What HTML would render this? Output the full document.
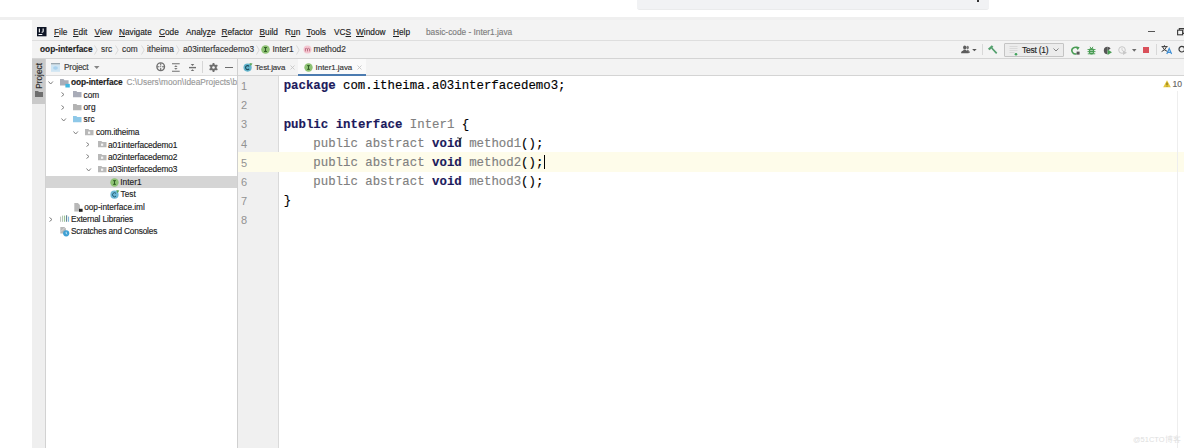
<!DOCTYPE html>
<html><head><meta charset="utf-8">
<style>
*{margin:0;padding:0;box-sizing:border-box}
html,body{width:1184px;height:448px;overflow:hidden;background:#fff;position:relative;font-family:"Liberation Sans",sans-serif;font-size:8px;color:#222}
.a{position:absolute}
.t{position:absolute;white-space:pre;-webkit-text-stroke:0.15px currentColor;line-height:13.8px;height:13.8px;font-size:8.3px}
.u{text-decoration:underline;text-decoration-thickness:0.8px;text-underline-offset:0.6px}
.code{position:absolute;-webkit-text-stroke:0.15px currentColor;font-family:"Liberation Mono",monospace;font-size:12.37px;line-height:19.2px;white-space:pre;color:#000}
.kw{color:#1c1a5c;font-weight:bold}
.gr{color:#808080}
.ln{position:absolute;white-space:pre;left:238px;width:40px;font-family:"Liberation Sans",sans-serif;font-size:11px;color:#929292;line-height:19.2px;padding-left:3px}
svg{position:absolute;overflow:visible}
</style></head><body>

<!-- top browser bits -->
<div class="a" style="left:637px;top:-10px;width:352px;height:20px;border-radius:3px;background:#f1f2f4;border-bottom:1px solid #eaebec"></div>
<div class="a" style="left:0;top:17px;width:1184px;height:3px;background:#efefef"></div>

<!-- IDE frame -->
<div class="a" style="left:32px;top:20px;width:1152px;height:428px;background:#f3f3f3"></div>

<!-- menu row -->
<div class="a" style="left:32px;top:40px;width:1152px;height:1px;background:#dedede"></div>
<svg style="left:37px;top:27px" width="9.5" height="9.3"><rect width="9.5" height="9.3" fill="#0e1525"/><rect x="1.8" y="1.6" width="1.1" height="3.8" fill="#fff"/><path d="M5.6 1.6h1.1v2.7q0 1.4-1.5 1.4h-0.6v-1h0.4q0.6 0 0.6-0.5z" fill="#fff"/><rect x="1.5" y="7" width="3.8" height="1" fill="#fff"/></svg>

<div class="t" style="left:54px;top:26px"><span class="u">F</span>ile</div>
<div class="t" style="left:73px;top:26px"><span class="u">E</span>dit</div>
<div class="t" style="left:94.5px;top:26px"><span class="u">V</span>iew</div>
<div class="t" style="left:119px;top:26px"><span class="u">N</span>avigate</div>
<div class="t" style="left:159px;top:26px"><span class="u">C</span>ode</div>
<div class="t" style="left:186px;top:26px">Analy<span class="u">z</span>e</div>
<div class="t" style="left:221.5px;top:26px"><span class="u">R</span>efactor</div>
<div class="t" style="left:259.5px;top:26px"><span class="u">B</span>uild</div>
<div class="t" style="left:285px;top:26px">R<span class="u">u</span>n</div>
<div class="t" style="left:306.5px;top:26px"><span class="u">T</span>ools</div>
<div class="t" style="left:334px;top:26px">VC<span class="u">S</span></div>
<div class="t" style="left:356px;top:26px"><span class="u">W</span>indow</div>
<div class="t" style="left:393px;top:26px"><span class="u">H</span>elp</div>
<div class="t" style="left:426px;top:26px;color:#7e7e7e">basic-code - Inter1.java</div>
<div class="a" style="left:1148px;top:31.3px;width:7px;height:1.1px;background:#555"></div>
<svg style="left:1176.5px;top:28.3px" width="9" height="7.5"><path d="M2.3 2V0.6h5v4.8H6" fill="none" stroke="#3a3a3a" stroke-width="1.1"/><rect x="0.6" y="2.2" width="5" height="4.6" fill="none" stroke="#3a3a3a" stroke-width="1.1"/></svg>

<!-- breadcrumb row -->
<div class="a" style="left:32px;top:58px;width:1152px;height:1px;background:#d4d4d4"></div>
<div class="t" style="left:40px;top:43px;font-weight:bold;color:#222">oop-interface</div>
<div class="t" style="left:101px;top:43px;color:#333">src</div>
<div class="t" style="left:122px;top:43px;color:#333">com</div>
<div class="t" style="left:147px;top:43px;color:#333">itheima</div>
<div class="t" style="left:183px;top:43px;color:#333">a03interfacedemo3</div>
<div class="t" style="left:272.5px;top:43px;color:#333">Inter1</div>
<div class="t" style="left:313.5px;top:43px;color:#333">method2</div>

<!-- main area -->
<!-- left stripe -->
<div class="a" style="left:32px;top:59px;width:13px;height:389px;background:#efefef"></div>
<div class="a" style="left:45px;top:59px;width:1px;height:389px;background:#d2d2d2"></div>
<div class="a" style="left:32px;top:59px;width:13px;height:45px;background:#cacaca"></div>
<div class="t" style="left:21.2px;top:69px;transform:rotate(-90deg);transform-origin:center;width:38px;text-align:center;color:#2a2a2a">Project</div>

<!-- project panel -->
<div class="a" style="left:46px;top:59px;width:191px;height:16px;background:#f5f5f5"></div>
<div class="a" style="left:46px;top:75px;width:191px;height:1px;background:#dcdcdc"></div>
<div class="a" style="left:46px;top:76px;width:191px;height:372px;background:#fff"></div>
<div class="t" style="left:64px;top:61px;color:#3a3a3a;letter-spacing:-0.2px">Project</div>

<!-- selected row -->
<div class="a" style="left:46px;top:176px;width:191px;height:12px;background:#d5d5d5"></div>

<div class="t" style="left:71px;top:76px;font-weight:bold;letter-spacing:-0.08px">oop-interface</div>
<div class="t" style="left:126.5px;top:76px;color:#999">C:\Users\moon\IdeaProjects\b</div>
<div class="t" style="left:83.5px;top:88.5px">com</div>
<div class="t" style="left:83.5px;top:101px">org</div>
<div class="t" style="left:83.5px;top:113px">src</div>
<div class="t" style="left:96px;top:125.5px;letter-spacing:-0.13px">com.itheima</div>
<div class="t" style="left:108px;top:138.5px;letter-spacing:-0.1px">a01interfacedemo1</div>
<div class="t" style="left:108px;top:150.8px;letter-spacing:-0.1px">a02interfacedemo2</div>
<div class="t" style="left:108px;top:163.2px;letter-spacing:-0.1px">a03interfacedemo3</div>
<div class="t" style="left:120.3px;top:175.5px">Inter1</div>
<div class="t" style="left:120.6px;top:188px">Test</div>
<div class="t" style="left:84.2px;top:200.5px;letter-spacing:-0.05px">oop-interface.iml</div>
<div class="t" style="left:71px;top:212.8px;letter-spacing:-0.14px">External Libraries</div>
<div class="t" style="left:71px;top:225px;letter-spacing:-0.17px">Scratches and Consoles</div>

<!-- editor -->
<div class="a" style="left:237px;top:59px;width:1px;height:389px;background:#d0d0d0"></div>
<div class="a" style="left:238px;top:59px;width:946px;height:16px;background:#f3f3f3"></div>
<div class="a" style="left:238px;top:75px;width:946px;height:1px;background:#d4d4d4"></div>
<div class="a" style="left:298px;top:59px;width:68px;height:16px;background:#fafafa"></div>
<div class="a" style="left:298px;top:73.5px;width:68px;height:2px;background:#4b7bb0"></div>
<div class="t" style="left:255px;top:60.9px;color:#333;font-size:7.9px;letter-spacing:-0.1px">Test.java</div>
<div class="t" style="left:315.6px;top:60.9px;color:#333;font-size:7.9px;letter-spacing:-0.02px">Inter1.java</div>

<div class="a" style="left:238px;top:76px;width:946px;height:372px;background:#fff"></div>
<div class="a" style="left:238px;top:76px;width:40px;height:372px;background:#f0f0f0"></div>
<div class="a" style="left:278px;top:76px;width:1px;height:372px;background:#dadada"></div>
<div class="a" style="left:238px;top:152px;width:946px;height:19.8px;background:#fefcea"></div>

<div class="ln" style="top:77px">1
2
3
4
5
6
7
8</div>
<div class="code" style="left:283.7px;top:77.2px"><span class="kw">package</span> com.itheima.a03interfacedemo3;

<span class="kw">public</span> <span class="kw">interface</span> <span class="gr">Inter1</span> {
    <span class="gr">public abstract</span> <span class="kw">void</span> <span class="gr">method1</span>();
    <span class="gr">public abstract</span> <span class="kw">void</span> <span class="gr">method2</span>();
    <span class="gr">public abstract</span> <span class="kw">void</span> <span class="gr">method3</span>();
}</div>
<div class="a" style="left:543.5px;top:155px;width:1px;height:14px;background:#000"></div>

<div class="t" style="left:1172.5px;top:78px;color:#666;font-size:8.6px">10</div>
<div class="a" style="left:1176.5px;top:91px;width:1.5px;height:357px;background:#eeeeee"></div>


<!-- ===== ICONS ===== -->
<!-- breadcrumb chevrons -->
<svg style="left:94px;top:45px" width="4" height="10"><path d="M0.5 0.5 L3.2 5 L0.5 9.5" fill="none" stroke="#d2d2d2" stroke-width="0.8"/></svg>
<svg style="left:114.5px;top:45px" width="4" height="10"><path d="M0.5 0.5 L3.2 5 L0.5 9.5" fill="none" stroke="#d2d2d2" stroke-width="0.8"/></svg>
<svg style="left:140.5px;top:45px" width="4" height="10"><path d="M0.5 0.5 L3.2 5 L0.5 9.5" fill="none" stroke="#d2d2d2" stroke-width="0.8"/></svg>
<svg style="left:176px;top:45px" width="4" height="10"><path d="M0.5 0.5 L3.2 5 L0.5 9.5" fill="none" stroke="#d2d2d2" stroke-width="0.8"/></svg>
<svg style="left:256px;top:45px" width="4" height="10"><path d="M0.5 0.5 L3.2 5 L0.5 9.5" fill="none" stroke="#d2d2d2" stroke-width="0.8"/></svg>
<svg style="left:296px;top:45px" width="4" height="10"><path d="M0.5 0.5 L3.2 5 L0.5 9.5" fill="none" stroke="#d2d2d2" stroke-width="0.8"/></svg>
<!-- breadcrumb interface icon -->
<svg style="left:261px;top:45.3px" width="9" height="9"><circle cx="4.5" cy="4.5" r="4.3" fill="#8ec274"/><path d="M3 2.6h3M3 6.4h3M4.5 2.6v3.8" stroke="#2c5a22" stroke-width="1"/></svg>
<!-- breadcrumb method icon -->
<svg style="left:302.5px;top:45.3px" width="9" height="9"><circle cx="4.5" cy="4.5" r="4" fill="#f4c6d0"/><path d="M2.4 6.4V3.4M2.4 3.9Q3.4 2.8 4.5 3.9V6.4M4.5 3.9Q5.6 2.8 6.6 3.9V6.4" fill="none" stroke="#b25a72" stroke-width="0.8"/></svg>

<!-- toolbar right -->
<svg style="left:960px;top:45px" width="18" height="10"><g fill="#7a7a7a"><ellipse cx="7.6" cy="2.6" rx="1.3" ry="1.8"/><path d="M6.6 5h2l0.2 0.8q1 0.4 1 1.6v0.6H7.8z"/></g><g fill="#5c5c5c"><ellipse cx="4.7" cy="2.6" rx="1.6" ry="2"/><path d="M3.5 4.7h2.4l0.3 0.9q2.3 0.5 2.4 2v0.6H1.1v-0.6q0.2-1.5 2.2-2z"/></g><path d="M12.1 4h4.6L14.4 6.2z" fill="#555"/></svg>
<div class="a" style="left:982px;top:44px;width:1px;height:11px;background:#d8d8d8"></div>
<svg style="left:987px;top:44px" width="11" height="11"><path d="M0.9 4.7 L4.8 1.2 L6.4 2.8 L2.6 6.2z" fill="#54a06e"/><path d="M4.7 4 L9.7 9.3" stroke="#54a06e" stroke-width="1.7"/></svg>
<div class="a" style="left:1004px;top:43px;width:60px;height:14px;border:1px solid #c4c4c4;background:#ececec;border-radius:1px"></div>
<svg style="left:1009px;top:45px" width="12" height="11"><path d="M0.5 1.5h8M0.5 3.5h8M0.5 5.5h8M0.5 7.5h5" stroke="#d9d9d9" stroke-width="1"/><circle cx="7" cy="9.3" r="1.3" fill="#3fa35b"/></svg>
<div class="t" style="left:1022px;top:44px;color:#222;font-size:8.5px;letter-spacing:-0.25px">Test (1)</div>
<svg style="left:1053px;top:47.5px" width="6" height="4"><path d="M0.5 0.5 L3 3 L5.5 0.5" fill="none" stroke="#777" stroke-width="0.9"/></svg>
<!-- rerun -->
<svg style="left:1071px;top:45.5px" width="9" height="9"><path d="M6.8 2.6A3.3 3.3 0 1 0 5.6 7.6" fill="none" stroke="#499c54" stroke-width="1.5"/><path d="M5.2 0.2 L8.6 1.2 L6.6 4.2z" fill="#499c54"/><rect x="5.6" y="5.6" width="3" height="3" fill="#555"/></svg>
<!-- debug bug -->
<svg style="left:1087px;top:45.5px" width="9" height="9"><ellipse cx="4.5" cy="5.2" rx="2.7" ry="3.3" fill="#499c54"/><path d="M0.5 3.5h8M0.5 5.6h8M0.8 7.8h7.4M3 0.8l1 1.4M6 0.8l-1 1.4" stroke="#499c54" stroke-width="0.9"/><path d="M3.2 4.5h2.6M3.2 6.5h2.6" stroke="#cfe6d1" stroke-width="0.7"/></svg>
<!-- coverage -->
<svg style="left:1103px;top:45.5px" width="9" height="9"><path d="M4.5 0.8A3.7 3.7 0 1 0 4.5 8.2z" fill="#555"/><path d="M4.5 0.8A3.7 3.7 0 0 1 7.6 2.6L4.5 4.8z" fill="#555"/><path d="M4.6 3.6 L9 6.3 L4.6 9z" fill="#499c54"/></svg>
<!-- profiler -->
<svg style="left:1118px;top:45.5px" width="9" height="9"><circle cx="4" cy="4" r="3.3" fill="none" stroke="#c8c8c8" stroke-width="1"/><path d="M4 2v2.2l1.3 1" fill="none" stroke="#c8c8c8" stroke-width="0.8"/><path d="M5 4.6 L9 6.8 L5 9z" fill="#c8c8c8"/></svg>
<svg style="left:1132px;top:48.5px" width="5" height="3"><path d="M0 0h4.5L2.25 2.8z" fill="#6b6b6b"/></svg>
<div class="a" style="left:1143.2px;top:46.5px;width:6px;height:6px;background:#d9505a"></div>
<div class="a" style="left:1156px;top:44px;width:1px;height:11px;background:#d8d8d8"></div>
<svg style="left:1161px;top:45px" width="12" height="10"><path d="M0.6 1.6h6M3.4 0.2v1.4M1.4 1.6q1.2 3.6 5.2 5M5.6 1.6q-1.1 3.4-5 5" fill="none" stroke="#3c3c3c" stroke-width="1"/><path d="M5.8 9 L8.2 3.6 L10.6 9M6.7 7.3h3" fill="none" stroke="#3e8fd6" stroke-width="1.2"/></svg>
<svg style="left:1178px;top:45.5px" width="8" height="8"><circle cx="3.8" cy="3.2" r="2.8" fill="none" stroke="#3a3a3a" stroke-width="1.2"/></svg>

<!-- left stripe folder -->
<svg style="left:35px;top:91px" width="8" height="6"><path d="M0 0h3l1 1h4v5H0z" fill="#6e6e6e"/></svg>

<!-- project header icons -->
<svg style="left:51px;top:63px" width="9" height="9"><rect x="0" y="0" width="9" height="1.6" fill="#9aa7b0"/><rect x="0" y="1.6" width="9" height="7.2" fill="#cfe5f3"/><ellipse cx="4.5" cy="5" rx="2.4" ry="1.8" fill="#a9d2ee"/></svg>
<svg style="left:93.5px;top:66px" width="6" height="3.2"><path d="M0 0h5.5L2.75 3z" fill="#858585"/></svg>
<svg style="left:155.5px;top:62.3px" width="9.5" height="9.5"><circle cx="4.7" cy="4.7" r="3.8" fill="none" stroke="#707070" stroke-width="1.4"/><path d="M4.7 1.2v2.2M4.7 6v2.2M1.2 4.7h2.2M6 4.7h2.2" stroke="#707070" stroke-width="1.1"/><circle cx="4.7" cy="4.7" r="0.6" fill="#707070"/></svg>
<svg style="left:172.3px;top:62.5px" width="8" height="9"><path d="M0 0.8h7.7M0 8.2h7.7" stroke="#707070" stroke-width="1.1"/><path d="M3.85 2.2 L5.6 3.9H2.1z M3.85 6.8 L5.6 5.1H2.1z" fill="#7a7a7a"/></svg>
<svg style="left:188.8px;top:62.5px" width="8" height="9"><path d="M0 4.6h7" stroke="#707070" stroke-width="1.4"/><path d="M3.5 3 L5.3 1.1H1.7z M3.5 6.2 L5.3 8.1H1.7z" fill="#707070"/></svg>
<div class="a" style="left:202px;top:61px;width:1px;height:12px;background:#d6d6d6"></div>
<svg style="left:208.5px;top:62.5px" width="9" height="9"><g fill="#6e6e6e"><circle cx="4.5" cy="4.5" r="3.2"/><rect x="3.6" y="0" width="1.8" height="9"/><rect x="3.6" y="0" width="1.8" height="9" transform="rotate(60 4.5 4.5)"/><rect x="3.6" y="0" width="1.8" height="9" transform="rotate(120 4.5 4.5)"/></g><circle cx="4.5" cy="4.5" r="1.3" fill="#f5f5f5"/></svg>
<div class="a" style="left:225px;top:66.5px;width:8px;height:1.3px;background:#6e6e6e"></div>

<!-- tree chevrons -->
<svg style="left:48px;top:80.5px" width="6" height="4"><path d="M0.5 0.5 L2.7 3 L4.9 0.5" fill="none" stroke="#808080" stroke-width="1"/></svg>
<svg style="left:61px;top:92px" width="4" height="5"><path d="M0.5 0.5 L3 2.5 L0.5 4.5" fill="none" stroke="#808080" stroke-width="1"/></svg>
<svg style="left:61px;top:104.5px" width="4" height="5"><path d="M0.5 0.5 L3 2.5 L0.5 4.5" fill="none" stroke="#808080" stroke-width="1"/></svg>
<svg style="left:60.5px;top:118px" width="6" height="4"><path d="M0.5 0.5 L2.7 3 L4.9 0.5" fill="none" stroke="#808080" stroke-width="1"/></svg>
<svg style="left:73px;top:130.5px" width="6" height="4"><path d="M0.5 0.5 L2.7 3 L4.9 0.5" fill="none" stroke="#808080" stroke-width="1"/></svg>
<svg style="left:86px;top:141.5px" width="4" height="5"><path d="M0.5 0.5 L3 2.5 L0.5 4.5" fill="none" stroke="#808080" stroke-width="1"/></svg>
<svg style="left:86px;top:154px" width="4" height="5"><path d="M0.5 0.5 L3 2.5 L0.5 4.5" fill="none" stroke="#808080" stroke-width="1"/></svg>
<svg style="left:85.5px;top:167.5px" width="6" height="4"><path d="M0.5 0.5 L2.7 3 L4.9 0.5" fill="none" stroke="#808080" stroke-width="1"/></svg>
<svg style="left:48.5px;top:216.5px" width="4" height="5"><path d="M0.5 0.5 L3 2.5 L0.5 4.5" fill="none" stroke="#808080" stroke-width="1"/></svg>

<!-- tree icons -->
<svg style="left:60px;top:79px" width="10" height="9"><path d="M0 0h3.5l1 1.2H8.6V6.5H0z" fill="#a9adb8"/><rect x="5.4" y="4.9" width="4.4" height="3.6" fill="#40b6e0"/></svg>
<svg style="left:72.6px;top:91.4px" width="8.5" height="6.5"><path d="M0 0h3.3l1 1.1H8.5V6.3H0z" fill="#a9acb8"/></svg>
<svg style="left:72.6px;top:103.8px" width="8.5" height="6.5"><path d="M0 0h3.3l1 1.1H8.5V6.3H0z" fill="#b3b3b3"/></svg>
<svg style="left:72.6px;top:116.3px" width="8.5" height="6.5"><path d="M0 0h3.3l1 1.1H8.5V6.3H0z" fill="#8ec8e8"/></svg>
<svg style="left:85px;top:128.8px" width="8.5" height="6.5"><path d="M0 0h3.3l1 1.1H8.5V6.3H0z" fill="#b8b8b8"/><rect x="3" y="2.6" width="2.2" height="2.2" fill="#f4f4f4"/></svg>
<svg style="left:97.6px;top:141.2px" width="8.5" height="6.5"><path d="M0 0h3.3l1 1.1H8.5V6.3H0z" fill="#b8b8b8"/><rect x="3" y="2.6" width="2.2" height="2.2" fill="#f4f4f4"/></svg>
<svg style="left:97.6px;top:153.5px" width="8.5" height="6.5"><path d="M0 0h3.3l1 1.1H8.5V6.3H0z" fill="#b8b8b8"/><rect x="3" y="2.6" width="2.2" height="2.2" fill="#f4f4f4"/></svg>
<svg style="left:97.6px;top:165.9px" width="8.5" height="6.5"><path d="M0 0h3.3l1 1.1H8.5V6.3H0z" fill="#b8b8b8"/><rect x="3" y="2.6" width="2.2" height="2.2" fill="#f4f4f4"/></svg>
<svg style="left:110.3px;top:177.8px" width="9" height="9"><circle cx="4.5" cy="4.5" r="4.2" fill="#8ec274"/><path d="M3.1 2.7h2.8M3.1 6.3h2.8M4.5 2.7v3.6" stroke="#2c5a22" stroke-width="1"/></svg>
<svg style="left:110.3px;top:190px" width="9.5" height="9"><circle cx="4.5" cy="4.7" r="4.1" fill="#6cb8d6"/><path d="M6 3.4A2 2 0 1 0 6 6.1" fill="none" stroke="#215a70" stroke-width="1"/><path d="M6.2 0 L9.3 0.6 L7.6 3.2z" fill="#57a55b"/></svg>
<svg style="left:73.5px;top:202.5px" width="9" height="9"><path d="M0.3 0h3.6l2 2v6.4H0.3z" fill="#b8b8b8"/><rect x="5" y="5.8" width="3.6" height="3" fill="#222"/></svg>
<svg style="left:59.6px;top:215.2px" width="10" height="7"><path d="M0.6 1.6v5.2" stroke="#b9c2b9" stroke-width="1"/><path d="M2.6 0.6v6.2" stroke="#a9bfa9" stroke-width="1"/><path d="M4.6 0.6v6.2" stroke="#8fbf8a" stroke-width="1"/><path d="M6.6 0.3v6.5" stroke="#5f7f8f" stroke-width="1.1"/><path d="M8.6 1.6v5.2" stroke="#74b3d8" stroke-width="1"/></svg>
<svg style="left:60px;top:226.5px" width="10" height="10"><path d="M0.3 0h4l1.6 1.6v5H0.3z" fill="#b8b8b8"/><path d="M1 4.5L4.5 1" stroke="#e8e8e8" stroke-width="0.7"/><circle cx="6.2" cy="6.3" r="3.1" fill="#3ea0d4"/><path d="M6.2 4.8v1.7l1 0.6" fill="none" stroke="#fff" stroke-width="0.7"/></svg>

<!-- tab icons -->
<svg style="left:243px;top:63px" width="10" height="9"><circle cx="4.6" cy="4.6" r="4.1" fill="#62b4cc"/><path d="M6.1 3.3A2 2 0 1 0 6.1 5.9" fill="none" stroke="#1d4d5e" stroke-width="1.1"/><path d="M6.4 0 L9.5 0.5 L7.8 3.1z" fill="#58a65b"/></svg>
<svg style="left:289.5px;top:65px" width="5" height="5"><path d="M0.5 0.5L4.5 4.5M4.5 0.5L0.5 4.5" stroke="#c2c2c2" stroke-width="0.8"/></svg>
<svg style="left:304px;top:62.5px" width="9" height="9"><circle cx="4.5" cy="4.5" r="4.2" fill="#8ec274"/><path d="M3.1 2.7h2.8M3.1 6.3h2.8M4.5 2.7v3.6" stroke="#2c5a22" stroke-width="1"/></svg>
<svg style="left:356.5px;top:65px" width="5" height="5"><path d="M0.5 0.5L4.5 4.5M4.5 0.5L0.5 4.5" stroke="#c2c2c2" stroke-width="0.8"/></svg>

<!-- warning -->
<svg style="left:1162.5px;top:80px" width="8" height="7.5"><path d="M4 0.3 L7.8 7.2H0.2z" fill="#e2c53c"/><path d="M4 2.6v2.4M4 5.7v0.8" stroke="#5a4a00" stroke-width="0.8"/></svg>
<svg style="left:457.3px;top:136.6px" width="6" height="12"><path d="M0.2 0.8q1.4 0 2.8 0.8q1-0.8 2-0.8M3 1.6v7.5" fill="none" stroke="#222" stroke-width="0.9"/></svg>
<!-- watermark -->
<div class="t" style="left:1133px;top:433px;color:#dedede;font-size:7.5px;-webkit-text-stroke:0">@51CTO博客</div>
<!-- top tiny mark -->
<div class="a" style="left:977px;top:0;width:1.5px;height:1.5px;background:#333"></div>

</body></html>
